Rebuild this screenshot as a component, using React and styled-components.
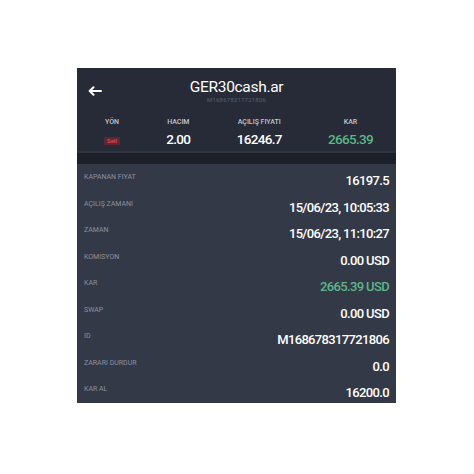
import React from 'react';
import styled, { createGlobalStyle } from 'styled-components';

const GlobalStyle = createGlobalStyle`
  html, body {
    margin: 0;
    padding: 0;
    background: #ffffff;
  }
  body {
    font-family: Roboto, "Liberation Sans", sans-serif;
  }
`;

const Page = styled.div`
  width: 474px;
  height: 474px;
  box-sizing: border-box;
  padding: 68px 0 0 77px;
`;

const Panel = styled.div`
  width: 319px;
  background: #333947;
  display: flex;
  flex-direction: column;
`;

const Header = styled.div`
  background: #262b37;
  height: 85px;
  box-sizing: border-box;
  padding-top: 9.5px;
  border-bottom: 2px solid #2e3340;
`;

const TopBar = styled.div`
  display: grid;
  grid-template-columns: 1fr auto 1fr;
  align-items: center;
`;

const BackButton = styled.div`
  padding-left: 11px;
  display: flex;
  align-items: center;
  padding-top: 1px;
`;

const TitleBlock = styled.div`
  display: flex;
  flex-direction: column;
  align-items: center;
`;

const Title = styled.div`
  color: #ffffff;
  font-size: 15.5px;
  line-height: 18px;
  letter-spacing: -0.3px;
`;

const Subtitle = styled.div`
  color: #596070;
  font-size: 6px;
  line-height: 8px;
  letter-spacing: 0.2px;
  margin-top: 0.5px;
`;

const Stats = styled.div`
  display: flex;
  justify-content: space-between;
  padding: 0 23px 0 27px;
  margin-top: 14px;
`;

const Stat = styled.div`
  display: flex;
  flex-direction: column;
  align-items: center;
`;

const StatLabel = styled.div`
  color: #c3c7cf;
  font-size: 7px;
  font-weight: 500;
  line-height: 9px;
  text-transform: uppercase;
`;

const StatValue = styled.div`
  color: ${(p) => (p.$green ? '#5db688' : '#ffffff')};
  font-size: 13.5px;
  font-weight: 500;
  line-height: 16px;
  letter-spacing: -0.7px;
  margin-top: 4px;
  height: 16px;
  display: flex;
  align-items: center;
`;

const Badge = styled.span`
  background: #5b2833;
  color: #e24b5b;
  font-size: 6px;
  line-height: 8px;
  padding: 0 3px;
  border-radius: 1px;
  letter-spacing: 0;
  margin-top: 3px;
`;

const Band = styled.div`
  background: #1d2029;
  height: 11px;
`;

const Rows = styled.div`
  display: flex;
  flex-direction: column;
`;

const Row = styled.div`
  height: 26.5px;
  box-sizing: border-box;
  padding: 9px 7px 0 7px;
  display: flex;
  justify-content: space-between;
  align-items: flex-start;
`;

const RowLabel = styled.div`
  color: #8c92a0;
  font-size: 7px;
  line-height: 8px;
  text-transform: uppercase;
`;

const RowValue = styled.div`
  color: ${(p) => (p.$green ? '#5db688' : '#ffffff')};
  font-size: 13px;
  font-weight: 500;
  line-height: 14px;
  letter-spacing: -0.65px;
  margin-top: 1px;
`;

const ArrowLeft = () => (
  <svg width="14" height="10" viewBox="0 0 14 10" fill="none">
    <path d="M13 5H2" stroke="#fff" strokeWidth="2" strokeLinecap="round" />
    <path d="M5.5 1.2L1.6 5l3.9 3.8" stroke="#fff" strokeWidth="2" strokeLinecap="round" strokeLinejoin="round" />
  </svg>
);

const rows = [
  { label: 'Kapanan Fiyat', value: '16197.5' },
  { label: 'Açiliş Zamani', value: '15/06/23, 10:05:33' },
  { label: 'Zaman', value: '15/06/23, 11:10:27' },
  { label: 'Komisyon', value: '0.00 USD' },
  { label: 'Kar', value: '2665.39 USD', green: true },
  { label: 'Swap', value: '0.00 USD' },
  { label: 'ID', value: 'M168678317721806' },
  { label: 'Zarari Durdur', value: '0.0' },
  { label: 'Kar Al', value: '16200.0' },
];

export default function App() {
  return (
    <Page>
      <GlobalStyle />
      <Panel>
        <Header>
          <TopBar>
            <BackButton>
              <ArrowLeft />
            </BackButton>
            <TitleBlock>
              <Title>GER30cash.ar</Title>
              <Subtitle>M168678317721806</Subtitle>
            </TitleBlock>
            <div />
          </TopBar>
          <Stats>
            <Stat>
              <StatLabel>YÖN</StatLabel>
              <StatValue>
                <Badge>Sell</Badge>
              </StatValue>
            </Stat>
            <Stat>
              <StatLabel>HACIM</StatLabel>
              <StatValue>2.00</StatValue>
            </Stat>
            <Stat>
              <StatLabel>AÇILIŞ FIYATI</StatLabel>
              <StatValue>16246.7</StatValue>
            </Stat>
            <Stat>
              <StatLabel>KAR</StatLabel>
              <StatValue $green>2665.39</StatValue>
            </Stat>
          </Stats>
        </Header>
        <Band />
        <Rows>
          {rows.map((r) => (
            <Row key={r.label}>
              <RowLabel>{r.label}</RowLabel>
              <RowValue $green={r.green}>{r.value}</RowValue>
            </Row>
          ))}
        </Rows>
      </Panel>
    </Page>
  );
}
